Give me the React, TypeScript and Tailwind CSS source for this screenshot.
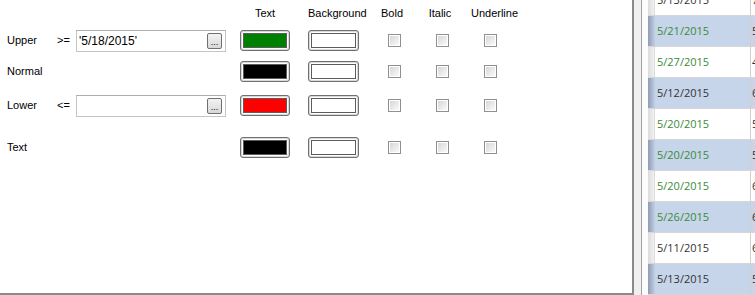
import React from "react";

type Row = { date: string; next: string; blue: boolean; green: boolean };

const rows: Row[] = [
    { date: "5/13/2015", next: "7", blue: false, green: false },
    { date: "5/21/2015", next: "5", blue: true, green: true },
    { date: "5/27/2015", next: "4", blue: false, green: true },
    { date: "5/12/2015", next: "6", blue: true, green: false },
    { date: "5/20/2015", next: "5", blue: false, green: true },
    { date: "5/20/2015", next: "5", blue: true, green: true },
    { date: "5/20/2015", next: "6", blue: false, green: true },
    { date: "5/26/2015", next: "6", blue: true, green: true },
    { date: "5/11/2015", next: "6", blue: false, green: false },
    { date: "5/13/2015", next: "5", blue: true, green: false },
];

const Swatch = ({ fill }: { fill: string }) => (
    <div className="h-[21px] rounded-[3px] border border-[#707070] bg-[#d9d9d9] p-px">
        <div className="h-full rounded-[2px] bg-white p-px">
            <div className={`h-full border border-[#5c5c5c] ${fill}`} />
        </div>
    </div>
);

const Check = () => (
    <div className="h-[13px] w-[13px] border border-[#8e8f8f] bg-white p-px">
        <div className="h-full w-full bg-linear-to-br from-[#d6d7d9] to-[#fafafa]" />
    </div>
);

const DateBox = ({ value }: { value: string }) => (
    <div className="flex h-[22px] w-[150px] items-center justify-between border border-[#c2c4c8] border-t-[#abadb3] bg-white pl-[2px] pr-[3px]">
        <span className="text-[12px] leading-none text-black">{value}</span>
        <div className="flex h-[16px] w-[15px] items-end justify-center rounded-[2px] border border-[#707070] bg-linear-to-b from-[#f3f3f3] to-[#d8d8d8] pb-[1px] text-[9px] leading-none text-black">
            ...
        </div>
    </div>
);

const StyleRow = ({ label, op, value, fill, className }: { label: string; op?: string; value?: string; fill: string; className: string }) => (
    <div className={`flex h-[23px] items-center ${className}`}>
        <span className="ml-[7px] w-[50px] text-[11px]">{label}</span>
        <span className="w-[19px] text-[11px]">{op}</span>
        <div className="w-[150px]">{value !== undefined && <DateBox value={value} />}</div>
        <div className="ml-[14px] w-[50px]">
            <Swatch fill={fill} />
        </div>
        <div className="ml-[18px] w-[51px]">
            <Swatch fill="bg-white" />
        </div>
        <div className="ml-[29px]">
            <Check />
        </div>
        <div className="ml-[35px]">
            <Check />
        </div>
        <div className="ml-[35px]">
            <Check />
        </div>
    </div>
);

export default function App() {
    return (
        <div className="flex h-[295px] w-[755px] overflow-hidden bg-[#f0f0f0]" style={{ fontFamily: '"Liberation Sans", Arial, sans-serif' }}>
            {/* Format settings panel */}
            <div className="h-[295px] w-[634px] shrink-0 border-b-2 border-r-2 border-[#8a8a8e] bg-white text-black">
                <div className="flex h-[29px] pt-[7px] text-[11px] leading-[13px]">
                    <span className="ml-[240px] w-[50px] text-center">Text</span>
                    <span className="ml-[18px] w-[51px] text-center">Background</span>
                    <span className="w-[66px] text-center">Bold</span>
                    <span className="w-[30px] text-center">Italic</span>
                    <span className="w-[79px] text-center">Underline</span>
                </div>
                <StyleRow label="Upper" op=">=" value="'5/18/2015'" fill="bg-[#008000]" className="" />
                <StyleRow label="Normal" fill="bg-black" className="mt-[8px]" />
                <StyleRow label="Lower" op="<=" value="" fill="bg-[#ff0000]" className="mt-[11px]" />
                <StyleRow label="Text" fill="bg-black" className="mt-[19px]" />
            </div>

            {/* Splitter gap */}
            <div className="w-[7px] shrink-0" />

            {/* Data grid */}
            <div className="flex-1 border-l border-[#a0a0a0] bg-[#fcfcfc] pl-[6px]">
                <div className="-mt-[15px]" style={{ fontFamily: '"Open Sans", sans-serif' }}>
                    {rows.map((r, i) => (
                        <div key={i} className={`flex h-[31px] border-b border-[#d6d6d6] ${r.blue ? "bg-[#c7d5ea]" : "bg-white"}`}>
                            <div className={`w-[7px] shrink-0 ${r.blue ? "bg-linear-to-r from-[#8f9cb3] to-[#c2d0e6]" : "border-r border-[#dcdcdc] bg-linear-to-r from-[#dcdcdc] to-[#f0f0f0]"}`} />
                            <div className={`flex w-[96px] shrink-0 items-center border-r border-[#d0d0d0] pl-[2px] text-[11px] ${r.green ? "text-[#3a8a3a]" : "text-[#333]"}`}>
                                {r.date}
                            </div>
                            <div className="flex items-center overflow-hidden pl-px text-[11px] text-[#333]">{r.next}</div>
                        </div>
                    ))}
                </div>
            </div>
        </div>
    );
}
